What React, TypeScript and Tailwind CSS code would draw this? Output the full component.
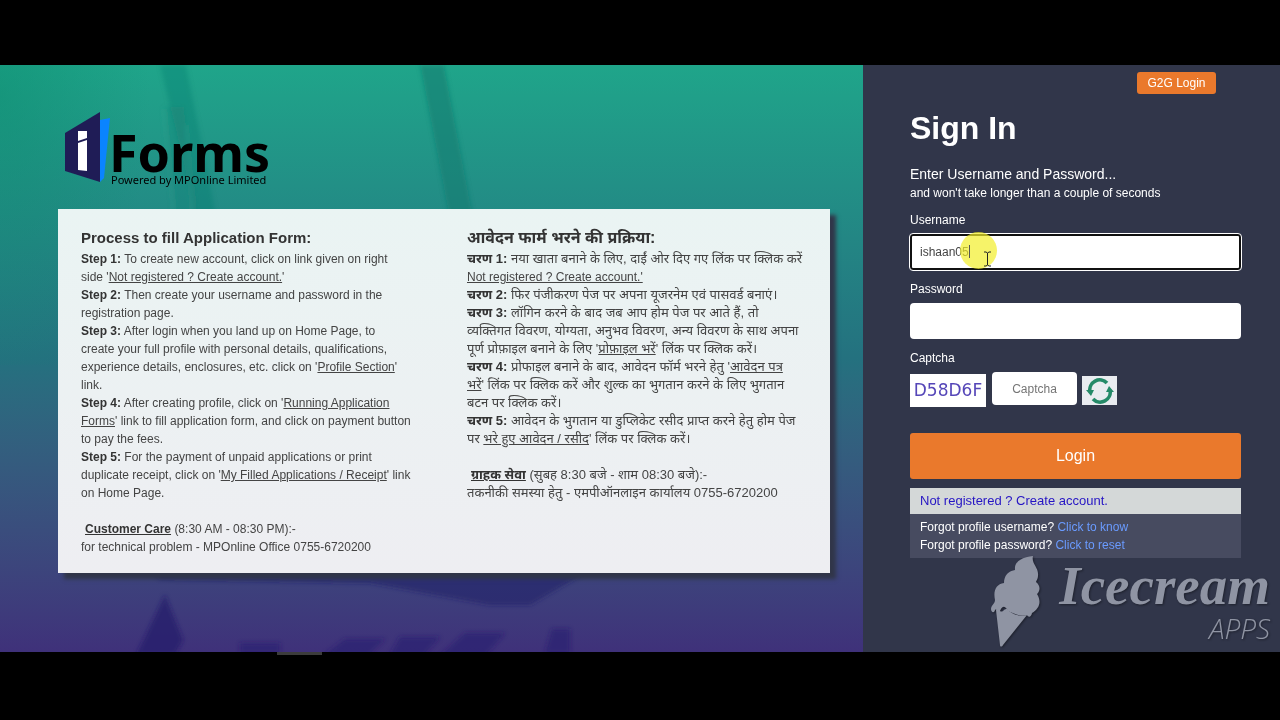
import type { ReactNode } from "react";

type Step = { label: string; body: ReactNode };

const englishSteps: Step[] = [
  {
    label: "Step 1:",
    body: (
      <>
        To create new account, click on link given on right
        <br />
        side '<u>Not registered ? Create account.</u>'
      </>
    ),
  },
  {
    label: "Step 2:",
    body: (
      <>
        Then create your username and password in the
        <br />
        registration page.
      </>
    ),
  },
  {
    label: "Step 3:",
    body: (
      <>
        After login when you land up on Home Page, to
        <br />
        create your full profile with personal details, qualifications,
        <br />
        experience details, enclosures, etc. click on '<u>Profile Section</u>'
        <br />
        link.
      </>
    ),
  },
  {
    label: "Step 4:",
    body: (
      <>
        After creating profile, click on '<u>Running Application</u>
        <br />
        <u>Forms</u>' link to fill application form, and click on payment button
        <br />
        to pay the fees.
      </>
    ),
  },
  {
    label: "Step 5:",
    body: (
      <>
        For the payment of unpaid applications or print
        <br />
        duplicate receipt, click on '<u>My Filled Applications / Receipt</u>' link
        <br />
        on Home Page.
      </>
    ),
  },
];

const hindiSteps: Step[] = [
  {
    label: "चरण 1:",
    body: (
      <>
        नया खाता बनाने के लिए, दाईं ओर दिए गए लिंक पर क्लिक करें
        <br />
        <u className="text-[12px]">Not registered ? Create account.'</u>
      </>
    ),
  },
  {
    label: "चरण 2:",
    body: <>फिर पंजीकरण पेज पर अपना यूजरनेम एवं पासवर्ड बनाएं।</>,
  },
  {
    label: "चरण 3:",
    body: (
      <>
        लॉगिन करने के बाद जब आप होम पेज पर आते हैं, तो
        <br />
        व्यक्तिगत विवरण, योग्यता, अनुभव विवरण, अन्य विवरण के साथ अपना
        <br />
        पूर्ण प्रोफ़ाइल बनाने के लिए '<u>प्रोफ़ाइल भरें</u>' लिंक पर क्लिक करें।
      </>
    ),
  },
  {
    label: "चरण 4:",
    body: (
      <>
        प्रोफाइल बनाने के बाद, आवेदन फॉर्म भरने हेतु '<u>आवेदन पत्र</u>
        <br />
        <u>भरें</u>' लिंक पर क्लिक करें और शुल्क का भुगतान करने के लिए भुगतान
        <br />
        बटन पर क्लिक करें।
      </>
    ),
  },
  {
    label: "चरण 5:",
    body: (
      <>
        आवेदन के भुगतान या डुप्लिकेट रसीद प्राप्त करने हेतु होम पेज
        <br />
        पर <u>भरे हुए आवेदन / रसीद</u>' लिंक पर क्लिक करें।
      </>
    ),
  },
];

function Backdrop() {
  return (
    <svg
      className="absolute inset-0 h-full w-full"
      viewBox="0 0 863 587"
      preserveAspectRatio="none"
      aria-hidden="true"
    >
      <defs>
        <filter id="soft">
          <feGaussianBlur stdDeviation="2" />
        </filter>
        <radialGradient id="corner" cx="0" cy="0.1" r="1">
          <stop offset="0" stopColor="#0a8a6c" stopOpacity=".45" />
          <stop offset="1" stopColor="#0a8a6c" stopOpacity="0" />
        </radialGradient>
      </defs>
      <path d="M0 0h150v300H0z" fill="url(#corner)" />
      <g filter="url(#soft)">
        <path d="M160 0h26l12 60 38 190h-22l-30-150z" fill="#0d7a70" opacity=".35" />
        <path d="M164 42l4 60 16 150h24l-14-130-10-80z" fill="#0d7a70" opacity=".2" />
        <path d="M164 44l18 190M186 60l14 180" fill="none" stroke="#5cc9ae" strokeWidth="2" opacity=".2" />
        <path d="M420 0h24l48 250h-24z" fill="#0d7a70" opacity=".55" />
        <path d="M360 220l110-38v14l-100 36z" fill="#0d7a70" opacity=".25" />
        <path d="M150 505h440l-60 35h-40l-120-22-210-4z" fill="#221f66" opacity=".55" />
        <path d="M165 530l18 45-8 14h-38z" fill="#221a6b" opacity=".7" />
        <path
          d="M240 578h40v10h-40zM345 574h40l-16 16h-45zM400 572h40l-16 18h-34zM465 568h40l-20 23h-45zM552 564h18v24h-25z"
          fill="#2a2270"
          opacity=".6"
        />
      </g>
    </svg>
  );
}

function Logo() {
  return (
    <div className="flex h-[76px] items-start">
      <svg width="46" height="72" viewBox="0 0 46 72" aria-hidden="true">
        <path d="M35 8l10-2-6 60-4 4z" fill="#0a84ff" />
        <path d="M0 21L35 0v70L0 59z" fill="#1f1c56" />
        <path d="M13 19h9v7l-9 3z" fill="#fff" />
        <path d="M13 31l9-3v31l-9-1z" fill="#fff" />
      </svg>
      <div className="pt-[14px] text-black">
        <div className="-ml-[2px] h-12 font-['Noto_Sans','Open_Sans',sans-serif] text-[52px] leading-[52px] font-bold">
          Forms
        </div>
        <div className="font-['Noto_Sans',sans-serif] text-[11px] leading-3">
          Powered by MPOnline Limited
        </div>
      </div>
    </div>
  );
}

type InstructionsProps = {
  lang: string;
  title: string;
  steps: Step[];
  care: string;
  hours: string;
  contact: string;
};

function Instructions({ lang, title, steps, care, hours, contact }: InstructionsProps) {
  const hindi = lang === "hi";

  return (
    <section
      lang={lang}
      className={`px-[23px] leading-[18px] whitespace-nowrap text-[#444] ${hindi ? "text-[13px]" : "text-[12px]"}`}
    >
      <h2 className={`leading-6 font-bold text-[#333] ${hindi ? "text-[16px]" : "text-[15px]"}`}>
        {title}
      </h2>
      {steps.map((step) => (
        <p key={step.label}>
          <b className="text-[#333]">{step.label}</b> {step.body}
        </p>
      ))}
      <p className="mt-[18px]">
        <b className="ml-1 text-[#333] underline">{care}</b> {hours}
      </p>
      <p>{contact}</p>
    </section>
  );
}

function RefreshIcon() {
  return (
    <svg width="30" height="26" viewBox="0 0 30 26" aria-hidden="true">
      <g fill="none" stroke="#258a68" strokeWidth="3.6">
        <path d="M5 14A10 10 0 0 1 22 5" />
        <path d="M25 12A10 10 0 0 1 8 21" />
      </g>
      <path d="M1 12h8l-3 6zM21 14h8l-5-6z" fill="#258a68" />
    </svg>
  );
}

function Watermark() {
  return (
    <div className="pointer-events-none absolute right-[10px] bottom-1 flex items-start gap-[18px] text-[#8f94a3] drop-shadow-[1px_1px_1px_rgba(0,0,0,0.4)]">
      <svg width="50" height="92" viewBox="0 0 50 92" fill="currentColor" aria-hidden="true">
        <path d="M42 0c-2 8 6 11 5 20 0 3-2 5-2 6 5 4 4 9 1 12 5 8 2 15-5 19-1 5-4 4-5 2-8 2-14-2-19-4-4-8-7-3-8 0-2 2-4-3-5-1-1 4-4 2-4-1 0-4 4-5 4-9-2-9 1-16 9-17 0-7 4-12 11-13C23 5 32 1 42 0z" />
        <path d="M5 54c3-1 4 3 7 1 2-2 4-3 6 0 6 5 12 5 18 4L12 89c-1 2-3 2-3 0z" />
      </svg>
      <div className="text-right">
        <div className="font-['Liberation_Serif',serif] text-[55px] leading-[60px] font-bold italic">
          Icecream
        </div>
        <div className="font-['Open_Sans',sans-serif] text-[28px] leading-6 font-light italic">
          APPS
        </div>
      </div>
    </div>
  );
}

export default function App() {
  return (
    <div className="min-h-screen bg-black pt-[65px] pb-[65px] font-['Liberation_Sans','Noto_Sans_Devanagari',sans-serif]">
      <main className="flex">
        <div className="relative flex-1 bg-linear-to-b from-[#1fa58a] via-[#24717f] to-[#3f317a]">
          <Backdrop />
          <div className="relative pt-[47px] pr-[33px] pb-[79px] pl-[58px]">
            <div className="mb-[21px] pl-[7px]">
              <Logo />
            </div>
            <div className="grid grid-cols-2 bg-linear-to-b from-[#eaf4f3] to-[#eeeef2] pt-[17px] pb-[17px] shadow-[6px_6px_4px_#313649]">
              <Instructions
                lang="en"
                title="Process to fill Application Form:"
                steps={englishSteps}
                care="Customer Care"
                hours="(8:30 AM - 08:30 PM):-"
                contact="for technical problem - MPOnline Office 0755-6720200"
              />
              <Instructions
                lang="hi"
                title="आवेदन फार्म भरने की प्रक्रिया:"
                steps={hindiSteps}
                care="ग्राहक सेवा"
                hours="(सुबह 8:30 बजे - शाम 08:30 बजे):-"
                contact="तकनीकी समस्या हेतु - एमपीऑनलाइन कार्यालय 0755-6720200"
              />
            </div>
          </div>
        </div>

        <aside className="relative w-[417px] bg-[#31364a] pt-[7px] pr-[39px] pl-[47px] text-white">
          <div className="flex justify-end pr-[25px]">
            <button type="button" className="h-[22px] w-[79px] rounded-[3px] bg-[#ea792c] text-[12px]">
              G2G Login
            </button>
          </div>
          <h1 className="mt-4 text-[32px] leading-9 font-bold">Sign In</h1>
          <p className="mt-[18px] text-[14px] leading-5">Enter Username and Password...</p>
          <p className="text-[12px] leading-[18px]">and won't take longer than a couple of seconds</p>

          <form onSubmit={(e) => e.preventDefault()}>
            <label htmlFor="username" className="mt-2 block text-[12px] leading-[20px]">
              Username
            </label>
            <div className="relative mt-1">
              <input
                id="username"
                type="text"
                defaultValue="ishaan05"
                className="block h-9 w-full rounded-[3px] border-2 border-[#111] bg-white px-2 text-[12px] text-[#444] outline-1 outline-white"
              />
              {/* click highlight, caret and mouse pointer */}
              <span className="absolute -top-[2px] left-[50px] h-[37px] w-[37px] rounded-full bg-[#f2ee2a]/70" />
              <span className="absolute top-[11px] left-[59px] h-[13px] w-px bg-[#555]" />
              <svg className="absolute top-[17px] left-[73px]" width="9" height="16" viewBox="0 0 9 16" aria-hidden="true">
                <path d="M1 1h2l1.500 1L6 1h2M4.500 2v12M1 15h2l1.500-1L6 15h2" fill="none" stroke="#222" />
              </svg>
            </div>
            <label htmlFor="password" className="mt-[9px] block text-[12px] leading-[20px]">
              Password
            </label>
            <input
              id="password"
              type="password"
              className="mt-1 block h-9 w-full rounded-[4px] bg-white px-[10px] text-[12px] text-[#444]"
            />
            <label htmlFor="captcha" className="mt-[9px] block text-[12px] leading-[20px]">
              Captcha
            </label>
            <div className="mt-1 flex h-9 items-start">
              <div className="mt-[2px] flex h-[33px] w-[76px] items-center justify-center bg-white font-['DejaVu_Sans',sans-serif] text-[17px] text-[#5546b8]">
                D58D6F
              </div>
              <input
                id="captcha"
                type="text"
                placeholder="Captcha"
                className="ml-[6px] h-[33px] w-[85px] rounded-[4px] bg-white text-center text-[12px] text-[#444] placeholder:text-[#757575]"
              />
              <button
                type="button"
                aria-label="Refresh captcha"
                className="mt-1 ml-[5px] flex h-[29px] w-[35px] items-center justify-center bg-[#e9ecf0]"
              >
                <RefreshIcon />
              </button>
            </div>
            <button
              type="submit"
              className="mt-[25px] block h-[46px] w-full rounded-[3px] bg-[#ea792c] text-[16px]"
            >
              Login
            </button>
          </form>

          <div className="mt-[9px] bg-[#d4d8d8] px-[10px] text-[13px] leading-[26px]">
            <a href="#register" className="text-[#2514c4]">
              Not registered ? Create account.
            </a>
          </div>
          <div className="bg-[#474b60] px-[10px] pt-1 pb-1 text-[12px] leading-[18px]">
            <p>
              Forgot profile username?{" "}
              <a href="#username-help" className="text-[#6a9bff]">
                Click to know
              </a>
            </p>
            <p>
              Forgot profile password?{" "}
              <a href="#password-help" className="text-[#6a9bff]">
                Click to reset
              </a>
            </p>
          </div>
          <Watermark />
        </aside>
      </main>
      {/* handle peeking out under the page */}
      <div className="grid grid-cols-[277px_45px]">
        <span className="col-start-2 h-[3px] bg-[#3c3c3c]" />
      </div>
    </div>
  );
}
